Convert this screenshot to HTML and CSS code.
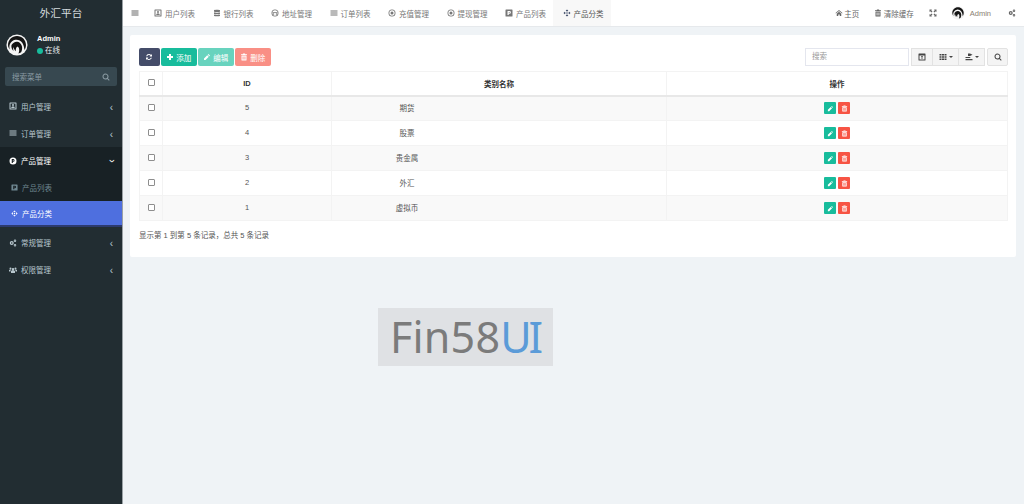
FILE: index.html
```html
<!DOCTYPE html>
<html lang="en">
<head>
    <meta charset="UTF-8">
    <title>外汇平台</title>
    <link rel="stylesheet" href="styles.css">
</head>
<body>
    <svg class="defs" width="0" height="0">
        <symbol id="i-bars" viewBox="0 0 16 16"><path d="M1 3h14v2H1zM1 7h14v2H1zM1 11h14v2H1z"/></symbol>
        <symbol id="i-user" viewBox="0 0 16 16"><path fill-rule="evenodd" d="M2 1h12a1 1 0 0 1 1 1v12a1 1 0 0 1-1 1H2a1 1 0 0 1-1-1V2a1 1 0 0 1 1-1zm1 2v10h10V3zm5 1a2 2 0 1 1 0 4 2 2 0 0 1 0-4zM4.500 12c0-2 1.500-3.500 3.500-3.500s3.500 1.500 3.500 3.500z"/></symbol>
        <symbol id="i-db" viewBox="0 0 16 16"><path d="M2 2.500C2 1 14 1 14 2.500V5C14 6.500 2 6.500 2 5zM2 6.500c2 1.300 10 1.300 12 0V9.500c0 1.500-12 1.500-12 0zM2 11c2 1.300 10 1.300 12 0v2.500c0 1.500-12 1.500-12 0z"/></symbol>
        <symbol id="i-addr" viewBox="0 0 16 16"><path fill-rule="evenodd" d="M8 1a7 7 0 1 1 0 14A7 7 0 0 1 8 1zm0 1.700a5.300 5.300 0 1 0 0 10.600A5.300 5.300 0 0 0 8 2.700zM3.500 6h9v1.500h-9zM5 8.500a1.500 1.500 0 1 1 0 3 1.500 1.500 0 0 1 0-3zm6 0a1.500 1.500 0 1 1 0 3 1.500 1.500 0 0 1 0-3z"/></symbol>
        <symbol id="i-circle" viewBox="0 0 16 16"><path fill-rule="evenodd" d="M8 1a7 7 0 1 1 0 14A7 7 0 0 1 8 1zm0 1.700a5.300 5.300 0 1 0 0 10.600A5.300 5.300 0 0 0 8 2.700zM8 5a3 3 0 1 1 0 6 3 3 0 0 1 0-6z"/></symbol>
        <symbol id="i-pbox" viewBox="0 0 16 16"><path fill-rule="evenodd" d="M2 1h12a1 1 0 0 1 1 1v12a1 1 0 0 1-1 1H2a1 1 0 0 1-1-1V2a1 1 0 0 1 1-1zm3 3v8h2.500V9.500H9a2.700 2.700 0 0 0 0-5.500zm2.500 2H9a.8.8 0 0 1 0 1.600H7.500z"/></symbol>
        <symbol id="i-diamond" viewBox="0 0 16 16"><path fill-rule="evenodd" d="M8 1l2.600 2.600-1.500 1.500L8 4 6.900 5.100 5.400 3.600zM3.600 5.400l1.500 1.500L4 8l1.100 1.100-1.500 1.500L1 8zM12.400 5.400L15 8l-2.600 2.600-1.500-1.500L12 8l-1.100-1.100zM6.900 10.900L8 12l1.100-1.100 1.500 1.500L8 15l-2.600-2.600zM8 6.500a1.500 1.500 0 1 1 0 3 1.500 1.500 0 0 1 0-3z"/></symbol>
        <symbol id="i-p" viewBox="0 0 16 16"><path fill-rule="evenodd" d="M8 1a7 7 0 1 1 0 14A7 7 0 0 1 8 1zM5.500 4v8h2.200V9.500h1.200a2.800 2.800 0 0 0 0-5.500zm2.200 1.900h1a.9.900 0 0 1 0 1.800h-1z"/></symbol>
        <symbol id="i-cogs" viewBox="0 0 16 16"><path fill-rule="evenodd" d="M5.500 4a4 4 0 1 1 0 8 4 4 0 0 1 0-8zm0 2.500a1.500 1.500 0 1 0 0 3 1.500 1.500 0 0 0 0-3zM12 1a2.500 2.500 0 1 1 0 5 2.500 2.500 0 0 1 0-5zm0 1.700a.8.8 0 1 0 0 1.600.8.8 0 0 0 0-1.600zM12 10a2.500 2.500 0 1 1 0 5 2.500 2.500 0 0 1 0-5zm0 1.700a.8.8 0 1 0 0 1.600.8.8 0 0 0 0-1.600z"/></symbol>
        <symbol id="i-users" viewBox="0 0 16 16"><path d="M8 4a2.500 2.500 0 1 1 0 5 2.500 2.500 0 0 1 0-5zM3 3a2 2 0 1 1 0 4 2 2 0 0 1 0-4zM13 3a2 2 0 1 1 0 4 2 2 0 0 1 0-4zM4 10c0-.6 1-1 4-1s4 .4 4 1v4H4zM0 8c0-.5 1-.7 3-.7.500 0 1 .1 1.300.2C3.500 8 3 8.600 3 9.500V11H0zM16 8c0-.5-1-.7-3-.7-.500 0-1 .1-1.300.2.800.5 1.300 1.100 1.300 2V11h3z"/></symbol>
        <symbol id="i-search" viewBox="0 0 16 16"><path fill-rule="evenodd" d="M7 1a6 6 0 0 1 4.800 9.600l3.500 3.500-1.400 1.400-3.500-3.500A6 6 0 1 1 7 1zm0 2a4 4 0 1 0 0 8 4 4 0 0 0 0-8z"/></symbol>
        <symbol id="i-refresh" viewBox="0 0 16 16"><path d="M8 2c1.700 0 3.200.7 4.200 1.800L14 2v5H9l1.800-1.800A3.800 3.800 0 0 0 4.400 6.500H2.200A6 6 0 0 1 8 2zM2 9h5l-1.800 1.800a3.800 3.800 0 0 0 6.400-1.300h2.200A6 6 0 0 1 3.800 12.200L2 14z"/></symbol>
        <symbol id="i-plus" viewBox="0 0 16 16"><path d="M6 2h4v4h4v4h-4v4H6v-4H2V6h4z"/></symbol>
        <symbol id="i-pencil" viewBox="0 0 16 16"><path d="M11 2l3 3-1.500 1.500-3-3zM8.500 4.500l3 3L5 14H2v-3z"/></symbol>
        <symbol id="i-trash" viewBox="0 0 16 16"><path fill-rule="evenodd" d="M6 1h4l.7 1.500H14V4H2V2.500h3.300zM3 5h10v9a1 1 0 0 1-1 1H4a1 1 0 0 1-1-1zm2.200 2v6h1.200V7zm2.200 0v6h1.200V7zm2.200 0v6h1.200V7z"/></symbol>
        <symbol id="i-home" viewBox="0 0 16 16"><path d="M8 2l7 6.200-.9 1L8 4 1.900 9.200l-.9-1zM3.500 9.300L8 5.500l4.500 3.800V14H9.500v-3h-3v3h-3z"/></symbol>
        <symbol id="i-expand" viewBox="0 0 16 16"><path d="M1 1h5L4.500 2.500l2.500 2.500L5 7 2.500 4.500 1 6zM15 1v5l-1.500-1.500L11 7 9 5l2.500-2.500L10 1zM1 15v-5l1.500 1.500L5 9l2 2-2.500 2.500L6 15zM15 15h-5l1.500-1.500L9 11l2-2 2.500 2.500L15 10z"/></symbol>
        <symbol id="i-table" viewBox="0 0 16 16"><path fill-rule="evenodd" d="M2 1h12a1 1 0 0 1 1 1v12a1 1 0 0 1-1 1H2a1 1 0 0 1-1-1V2a1 1 0 0 1 1-1zm1 4v8h10V5zm3 1.500h4V8H8.800v4H7.200V8H6z"/></symbol>
        <symbol id="i-grid" viewBox="0 0 16 16"><path d="M1 2h4v3H1zM6 2h4v3H6zM11 2h4v3h-4zM1 6.500h4v3H1zM6 6.500h4v3H6zM11 6.500h4v3h-4zM1 11h4v3H1zM6 11h4v3H6zM11 11h4v3h-4z"/></symbol>
        <symbol id="i-export" viewBox="0 0 16 16"><path d="M6 1h4v5H6zM10 1l5 2.500L10 6zM1 8h9l1 2H1zM1 12h14v2.500H1z"/></symbol>
        <symbol id="i-avatar" viewBox="0 0 24 24"><circle cx="12" cy="12" r="11.500" fill="#f4f4f4"/><path fill="#141414" d="M12 2.200c5.500 0 9.800 4.300 9.800 9.800 0 2-.6 3.900-1.700 5.500-.3-3-.8-5.500-2.400-8C16 7 13 5.700 10 6.300 7.500 6.800 5.500 8.500 4.300 11 3.500 13 3.500 15 4.200 17 2.900 15.400 2.200 13.800 2.200 12 2.200 6.500 6.500 2.200 12 2.200z"/><path fill="#141414" d="M6 12c1.500-2.500 4-4 6.500-3.500 2.500.5 4.500 2.500 5 5.500.3 2 0 4-1 6-1 .7-2 1.200-3 1.400 1-2 1.200-4.400.5-6.400l-1.500-1.500c-1.500 1-2 3-1.800 5.200-1.500-1.200-2.500-3-2.500-4.700-.6 1.500-.6 3 0 4.500-1.800-1.700-2.700-4-2.200-6.500z"/></symbol>
    </svg>

    <div class="app">
        <aside class="sidebar">
            <div class="brand">外汇平台</div>
            <div class="user-panel">
                <svg class="user-avatar"><use href="#i-avatar"/></svg>
                <div class="user-info">
                    <div class="user-name">Admin</div>
                    <div class="user-status"><span class="status-dot"></span>在线</div>
                </div>
            </div>
            <div class="menu-search">
                <span>搜索菜单</span>
                <svg class="ic"><use href="#i-search"/></svg>
            </div>
            <ul class="menu">
                <li class="menu-item"><svg class="ic"><use href="#i-user"/></svg><span>用户管理</span><em class="arrow">‹</em></li>
                <li class="menu-item"><svg class="ic"><use href="#i-bars"/></svg><span>订单管理</span><em class="arrow">‹</em></li>
                <li class="menu-open">
                    <div class="menu-item open"><svg class="ic"><use href="#i-p"/></svg><span>产品管理</span><em class="arrow down">‹</em></div>
                    <div class="sub-item"><svg class="ic"><use href="#i-pbox"/></svg><span>产品列表</span></div>
                    <div class="sub-item active"><svg class="ic"><use href="#i-diamond"/></svg><span>产品分类</span></div>
                </li>
                <li class="menu-item"><svg class="ic"><use href="#i-cogs"/></svg><span>常规管理</span><em class="arrow">‹</em></li>
                <li class="menu-item"><svg class="ic"><use href="#i-users"/></svg><span>权限管理</span><em class="arrow">‹</em></li>
            </ul>
        </aside>

        <div class="main">
            <header class="topbar">
                <a class="toggle"><svg class="ic"><use href="#i-bars"/></svg></a>
                <nav class="tabs">
                    <a class="tab"><svg class="ic"><use href="#i-user"/></svg>用户列表</a>
                    <a class="tab"><svg class="ic"><use href="#i-db"/></svg>银行列表</a>
                    <a class="tab"><svg class="ic"><use href="#i-addr"/></svg>地址管理</a>
                    <a class="tab"><svg class="ic"><use href="#i-bars"/></svg>订单列表</a>
                    <a class="tab"><svg class="ic"><use href="#i-circle"/></svg>充值管理</a>
                    <a class="tab"><svg class="ic"><use href="#i-circle"/></svg>提现管理</a>
                    <a class="tab"><svg class="ic"><use href="#i-pbox"/></svg>产品列表</a>
                    <a class="tab current"><svg class="ic"><use href="#i-diamond"/></svg>产品分类</a>
                </nav>
                <div class="top-right">
                    <a class="top-link"><svg class="ic"><use href="#i-home"/></svg>主页</a>
                    <a class="top-link"><svg class="ic"><use href="#i-trash"/></svg>清除缓存</a>
                    <a class="top-link"><svg class="ic"><use href="#i-expand"/></svg></a>
                    <a class="top-link top-user"><svg class="top-avatar"><use href="#i-avatar"/></svg>Admin</a>
                    <a class="top-link"><svg class="ic"><use href="#i-cogs"/></svg></a>
                </div>
            </header>

            <div class="content">
                <section class="panel">
                    <div class="toolbar">
                        <div class="tools">
                            <button class="btn btn-dark"><svg class="ic"><use href="#i-refresh"/></svg></button>
                            <button class="btn btn-green"><svg class="ic"><use href="#i-plus"/></svg>添加</button>
                            <button class="btn btn-green faded"><svg class="ic"><use href="#i-pencil"/></svg>编辑</button>
                            <button class="btn btn-red faded"><svg class="ic"><use href="#i-trash"/></svg>删除</button>
                        </div>
                        <div class="tools-right">
                            <div class="search-input">搜索</div>
                            <div class="btn-group">
                                <button class="btn-light wide-a"><svg class="ic"><use href="#i-table"/></svg></button>
                                <button class="btn-light wide-b"><svg class="ic"><use href="#i-grid"/></svg><i class="caret"></i></button>
                                <button class="btn-light wide-b"><svg class="ic"><use href="#i-export"/></svg><i class="caret"></i></button>
                            </div>
                            <button class="btn-light single"><svg class="ic"><use href="#i-search"/></svg></button>
                        </div>
                    </div>

                    <table class="data-table">
                        <colgroup>
                            <col class="col-check"><col class="col-id"><col class="col-name"><col>
                        </colgroup>
                        <thead>
                            <tr><th><span class="check"></span></th><th>ID</th><th>类别名称</th><th>操作</th></tr>
                        </thead>
                        <tbody>
                            <tr><td><span class="check"></span></td><td>5</td><td class="name-cell">期货</td><td><span class="act act-edit"><svg class="ic"><use href="#i-pencil"/></svg></span><span class="act act-del"><svg class="ic"><use href="#i-trash"/></svg></span></td></tr>
                            <tr><td><span class="check"></span></td><td>4</td><td class="name-cell">股票</td><td><span class="act act-edit"><svg class="ic"><use href="#i-pencil"/></svg></span><span class="act act-del"><svg class="ic"><use href="#i-trash"/></svg></span></td></tr>
                            <tr><td><span class="check"></span></td><td>3</td><td class="name-cell">贵金属</td><td><span class="act act-edit"><svg class="ic"><use href="#i-pencil"/></svg></span><span class="act act-del"><svg class="ic"><use href="#i-trash"/></svg></span></td></tr>
                            <tr><td><span class="check"></span></td><td>2</td><td class="name-cell">外汇</td><td><span class="act act-edit"><svg class="ic"><use href="#i-pencil"/></svg></span><span class="act act-del"><svg class="ic"><use href="#i-trash"/></svg></span></td></tr>
                            <tr><td><span class="check"></span></td><td>1</td><td class="name-cell">虚拟币</td><td><span class="act act-edit"><svg class="ic"><use href="#i-pencil"/></svg></span><span class="act act-del"><svg class="ic"><use href="#i-trash"/></svg></span></td></tr>
                        </tbody>
                    </table>

                    <div class="pager">显示第 1 到第 5 条记录，总共 5 条记录</div>
                </section>

                <div class="watermark">Fin58<span>UI</span></div>
            </div>
        </div>
    </div>
</body>
</html>
```

FILE: styles.css
```css
* { box-sizing: border-box; }
html, body { height: 100%; }
body { margin: 0; overflow: hidden; font-family: "Liberation Sans", "Noto Sans CJK SC", sans-serif; font-size: 7.5px; color: #555; background-color: #eff3f6; }
ul { list-style: none; margin: 0; padding: 0; }
.defs { position: absolute; }
.ic { width: 8px; height: 8px; fill: currentColor; flex: none; }

.app { display: flex; height: 504px; }

/* sidebar */
.sidebar { width: 123px; flex: none; background-color: #222d32; border-right: 1px solid #9aa1a5; color: #b8c7ce; }
.brand { height: 27px; line-height: 27px; text-align: center; font-size: 10.7px; color: #d5dcdf; }
.user-panel { display: flex; align-items: center; gap: 9px; height: 34px; margin-top: 1px; padding-left: 6px; }
.user-avatar { width: 22px; height: 22px; }
.user-info { line-height: 12px; }
.user-name { font-weight: bold; color: #fff; }
.user-status { display: flex; align-items: center; gap: 2px; color: #e6ecee; }
.status-dot { width: 6px; height: 6px; border-radius: 50%; background-color: #18bc9c; }
.menu-search { display: flex; align-items: center; justify-content: space-between; height: 19px; margin: 5px 5px 6.500px; padding: 0 7px 0 7px; background-color: #374850; border-radius: 2px; color: #8b9ba3; }
.menu-item { position: relative; display: flex; align-items: center; gap: 4px; height: 27.300px; padding-left: 9px; }
.menu-item.open { color: #fff; }
.arrow { position: absolute; right: 9px; top: 9px; font-style: normal; font-size: 10px; line-height: 12px; }
.arrow.down { transform: rotate(-90deg); top: 8px; }
.menu-open { margin-bottom: 1.500px; background-color: #182125; }
.sub-item { display: flex; align-items: center; gap: 4px; height: 27px; padding-left: 11px; color: #6f8791; }
.sub-item .ic { width: 7px; height: 7px; }
.sub-item.active { height: 26px; background-color: #4e6fdf; color: #fff; border-bottom: 2px solid #2c3a6e; }

/* top bar */
.main { flex: 1; min-width: 0; display: flex; flex-direction: column; }
.topbar { display: flex; align-items: center; height: 27px; background-color: #fff; border-bottom: 1px solid #e6e9ec; color: #666; }
.toggle { display: flex; width: 20px; padding-left: 8px; }
.tabs { display: flex; height: 26px; }
.tab { display: flex; align-items: center; gap: 3px; width: 58.500px; padding-left: 11px; color: #777; }
.tab.current { background-color: #f8f8f8; color: #555; padding-left: 10px; }
.tab.current .ic { color: #3c4a66; }
.top-right { display: flex; align-items: center; gap: 15px; margin-left: auto; padding-right: 8px; }
.top-link { display: flex; align-items: center; gap: 1.500px; }
.top-user { gap: 5px; color: #8a7f72; margin: 0 2px 0 -1px; }
.top-avatar { width: 14px; height: 14px; }

/* content */
.content { flex: 1; padding: 8px 8px 0 7px; }
.panel { height: 222px; padding: 13px 8px 0 9px; background-color: #fff; border-radius: 2px; }
.toolbar { display: flex; justify-content: space-between; height: 18px; margin-bottom: 5px; }
.tools { display: flex; gap: 1.500px; }
.tools-right { display: flex; gap: 2px; }
.btn { display: flex; align-items: center; justify-content: center; gap: 2px; height: 18px; width: 35.500px; padding: 0; border: 0; border-radius: 2px; font: inherit; color: #fff; }
.btn-dark { width: 20.500px; background-color: #444c69; }
.btn-green { background-color: #18bc9c; }
.btn-red { background-color: #f75444; }
.faded { opacity: .65; }
.search-input { width: 104px; height: 18px; line-height: 16px; padding-left: 6px; border: 1px solid #e4e6ee; color: #999; }
.btn-group { display: flex; }
.btn-light { display: flex; align-items: center; justify-content: center; gap: 2px; height: 18px; padding: 0; border: 1px solid #e2e2e2; background-color: #f4f4f4; color: #444; }
.btn-group .btn-light + .btn-light { border-left: 0; }
.wide-a { width: 22px; }
.wide-b { width: 26px; }
.single { width: 21px; border-radius: 2px; }
.caret { width: 0; height: 0; border-top: 2px solid #444; border-left: 2px solid transparent; border-right: 2px solid transparent; }

/* table */
.data-table { width: 100%; table-layout: fixed; border-collapse: collapse; text-align: center; }
.col-check { width: 23px; }
.col-id { width: 169px; }
.col-name { width: 335px; }
.data-table th, .data-table td { padding: 0; border: 1px solid #f3f3f3; }
.data-table th { height: 24px; border-bottom: 2px solid #e8e8e8; color: #333; font-weight: bold; }
.data-table td { height: 25px; padding-bottom: 2px; }
.data-table tbody tr:nth-child(odd) { background-color: #f9f9f9; }
.data-table td.name-cell { padding-right: 184px; }
.data-table th .check { position: relative; top: -1px; }
.check { display: inline-block; width: 7px; height: 7px; vertical-align: middle; border: 1px solid #8e8e8e; border-radius: 1px; background-color: #fff; }
.act { display: inline-flex; align-items: center; justify-content: center; width: 12px; height: 12px; margin: 2px 1px 0; border-radius: 1px; color: #fff; vertical-align: middle; }
.act .ic { width: 7px; height: 7px; }
.act-edit { background-color: #18bc9c; }
.act-del { background-color: #f75444; }
.pager { margin-top: 9px; line-height: 11px; color: #555; }

/* watermark */
.watermark { width: 175px; height: 58px; margin: 51px 0 0 248px; padding-left: 12px; line-height: 57px; background-color: #dfe1e4; font-family: "Noto Sans", sans-serif; font-size: 43px; letter-spacing: .2px; color: #7b7b7b; white-space: nowrap; }
.watermark span { color: #5b9bd8; letter-spacing: -3px; }
```
